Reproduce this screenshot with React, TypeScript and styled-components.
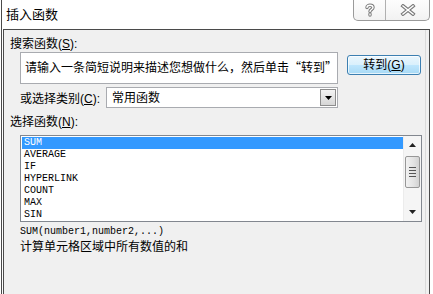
import React from 'react';
import styled, { createGlobalStyle } from 'styled-components';

const GlobalStyle = createGlobalStyle`
  html, body {
    margin: 0;
    padding: 0;
    background: #fff;
  }
  * {
    box-sizing: border-box;
  }
`;

const cjk = `"Liberation Sans", "Noto Sans CJK SC", sans-serif`;
const cjkFirst = `"Noto Sans CJK SC", "Liberation Sans", sans-serif`;
const mono = `"Liberation Mono", "DejaVu Sans Mono", monospace`;

const functions = ['SUM', 'AVERAGE', 'IF', 'HYPERLINK', 'COUNT', 'MAX', 'SIN'];

const App = () => {
  return (
    <>
      <GlobalStyle />
      <Window lang="zh-CN">
        <Frame>
          <TitleBar>
            <Title>插入函数</Title>
            <CaptionButtons>
              <CaptionButton $width={31}>
                <svg width="12" height="14" viewBox="0 0 12 14">
                  <path
                    d="M3 4.5 C3 1.5 9 1.5 9 4.5 C9 6.5 6 6.5 6 8.5 M6 11 L6 12"
                    fill="none"
                    stroke="#7a7a7a"
                    strokeWidth="3.4"
                    strokeLinecap="round"
                  />
                  <path
                    d="M3 4.5 C3 1.5 9 1.5 9 4.5 C9 6.5 6 6.5 6 8.5 M6 11 L6 12"
                    fill="none"
                    stroke="#fff"
                    strokeWidth="1.4"
                    strokeLinecap="round"
                  />
                </svg>
              </CaptionButton>
              <CaptionButton $width={44}>
                <svg width="16" height="12" viewBox="0 0 16 12">
                  <path d="M3 2 L13 10 M13 2 L3 10" stroke="#7a7a7a" strokeWidth="3.6" strokeLinecap="square" />
                  <path d="M3 2 L13 10 M13 2 L3 10" stroke="#fff" strokeWidth="1.5" strokeLinecap="square" />
                </svg>
              </CaptionButton>
            </CaptionButtons>
          </TitleBar>

          <Panel>
            <Label>
              搜索函数(<u>S</u>):
            </Label>
            <SearchRow>
              <SearchBox>请输入一条简短说明来描述您想做什么，然后单击“转到”</SearchBox>
              <GoButton>
                转到(<u>G</u>)
              </GoButton>
            </SearchRow>

            <CategoryRow>
              <CategoryLabel>
                或选择类别(<u>C</u>):
              </CategoryLabel>
              <Select>
                <SelectText>常用函数</SelectText>
                <DropButton>
                  <svg width="7" height="4" viewBox="0 0 7 4">
                    <path d="M0 0 L7 0 L3.5 4 Z" fill="#000" />
                  </svg>
                </DropButton>
              </Select>
            </CategoryRow>

            <ListLabel>
              选择函数(<u>N</u>):
            </ListLabel>
            <ListBox>
              <ListItems>
                {functions.map((name, i) => (
                  <ListItem key={name} $selected={i === 0}>
                    {name}
                  </ListItem>
                ))}
              </ListItems>
              <ScrollBar>
                <ScrollArrow>
                  <svg width="7" height="4" viewBox="0 0 7 4">
                    <path d="M0 4 L7 4 L3.5 0 Z" fill="#222" />
                  </svg>
                </ScrollArrow>
                <Track>
                  <Thumb>
                    <Grip />
                    <Grip />
                    <Grip />
                    <Grip />
                  </Thumb>
                </Track>
                <ScrollArrow>
                  <svg width="7" height="4" viewBox="0 0 7 4">
                    <path d="M0 0 L7 0 L3.5 4 Z" fill="#222" />
                  </svg>
                </ScrollArrow>
              </ScrollBar>
            </ListBox>

            <Syntax>SUM(number1,number2,...)</Syntax>
            <Description>计算单元格区域中所有数值的和</Description>
          </Panel>
        </Frame>
      </Window>
    </>
  );
};

export default App;

const Window = styled.div`
  width: 433px;
  height: 294px;
  overflow: hidden;
  background: #fff;
  padding-left: 1px;
  padding-right: 3px;
`;

const Frame = styled.div`
  display: flex;
  flex-direction: column;
  height: 100%;
  border-left: 1px solid #4a4a4a;
  padding-left: 1px;
`;

const TitleBar = styled.div`
  display: flex;
  justify-content: space-between;
  align-items: flex-start;
  height: 29px;
  flex-shrink: 0;
`;

const Title = styled.div`
  padding: 6px 0 0 3px;
  font-family: ${cjk};
  font-size: 13px;
  line-height: 17px;
  color: #000;
`;

const CaptionButtons = styled.div`
  display: flex;
  height: 21px;
  border: 1px solid #9a9a9a;
  border-top: none;
  border-radius: 0 0 5px 5px;
  background: linear-gradient(#fdfdfd, #f2f2f2);
  overflow: hidden;
`;

const CaptionButton = styled.div<{ $width: number }>`
  display: flex;
  justify-content: center;
  align-items: center;
  width: ${(p) => p.$width}px;
  height: 100%;
  & + & {
    border-left: 1px solid #b0b0b0;
  }
`;

const Panel = styled.div`
  flex: 1;
  display: flex;
  flex-direction: column;
  align-items: flex-start;
  padding: 6px 0 0 6px;
  background: #f0f0f0;
  border: 1px solid #4a4a4a;
  border-bottom: none;
  box-shadow: inset -3px 0 0 #f0f0f0, inset -4px 0 0 #dadada;
  font-family: ${cjk};
  font-size: 12px;
  color: #000;
`;

const Label = styled.div`
  line-height: 16px;
  height: 16px;
`;

const SearchRow = styled.div`
  display: flex;
  align-items: flex-start;
  gap: 9px;
  margin-left: 10px;
`;

const SearchBox = styled.div`
  width: 318px;
  height: 32px;
  padding: 6px 0 0 4px;
  background: #fff;
  border: 1px solid #a9abb0;
  font-family: ${cjkFirst};
  line-height: 16px;
  white-space: nowrap;
  overflow: hidden;
`;

const GoButton = styled.div`
  display: flex;
  justify-content: center;
  align-items: center;
  width: 74px;
  height: 20px;
  margin-top: 3px;
  border: 1px solid #3c7fb1;
  border-radius: 3px;
  background: linear-gradient(#eaf6fd 0%, #d9f0fc 50%, #bee6fd 51%, #a7d9f5 100%);
  box-shadow: inset 0 0 0 1px rgba(255, 255, 255, 0.7);
  line-height: 16px;
`;

const CategoryRow = styled.div`
  display: flex;
  align-items: center;
  margin: 3px 0 0 10px;
`;

const CategoryLabel = styled.div`
  width: 86px;
  line-height: 16px;
  padding-top: 2px;
`;

const Select = styled.div`
  display: flex;
  align-items: center;
  justify-content: space-between;
  width: 232px;
  height: 21px;
  padding: 0 1px 0 5px;
  background: #fff;
  border: 1px solid #a9abb0;
`;

const SelectText = styled.span`
  line-height: 16px;
`;

const DropButton = styled.div`
  display: flex;
  justify-content: center;
  align-items: center;
  width: 16px;
  height: 17px;
  border: 1px solid #8d8d8d;
  background: linear-gradient(#f4f4f4, #d6d6d6);
`;

const ListLabel = styled(Label)`
  margin-top: 6px;
`;

const ListBox = styled.div`
  display: flex;
  width: 402px;
  height: 87px;
  margin: 5px 0 0 10px;
  background: #fff;
  border: 1px solid #82878f;
`;

const ListItems = styled.div`
  flex: 1;
  display: flex;
  flex-direction: column;
  padding: 1px 0 0 1px;
`;

const ListItem = styled.div<{ $selected?: boolean }>`
  height: 12px;
  padding-left: 2px;
  font-family: ${mono};
  font-size: 10px;
  line-height: 12px;
  color: ${(p) => (p.$selected ? '#fff' : '#000')};
  background: ${(p) => (p.$selected ? '#3399ff' : 'transparent')};
`;

const ScrollBar = styled.div`
  display: flex;
  flex-direction: column;
  width: 18px;
  background: #f5f5f5;
  border-left: 1px solid #ececec;
`;

const ScrollArrow = styled.div`
  display: flex;
  justify-content: center;
  align-items: center;
  height: 18px;
`;

const Track = styled.div`
  flex: 1;
  padding: 2px 1px 0 1px;
`;

const Thumb = styled.div`
  display: flex;
  flex-direction: column;
  justify-content: center;
  align-items: center;
  gap: 2px;
  height: 32px;
  border: 1px solid #979797;
  border-radius: 2px;
  background: linear-gradient(90deg, #f2f2f2, #e2e2e2 60%, #d2d2d2);
`;

const Grip = styled.div`
  width: 7px;
  height: 1px;
  background: #555;
`;

const Syntax = styled.div`
  margin: 4px 0 0 10px;
  font-family: ${mono};
  font-size: 10px;
  line-height: 12px;
`;

const Description = styled.div`
  margin: 1px 0 0 10px;
  line-height: 16px;
`;
